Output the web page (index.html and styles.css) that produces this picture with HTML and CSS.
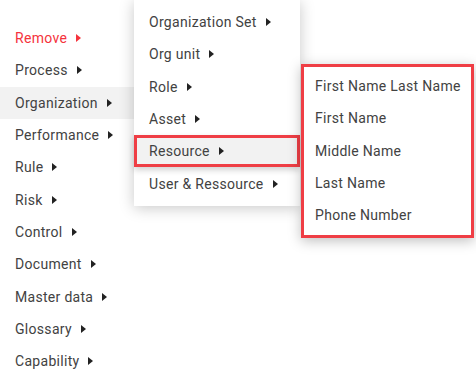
FILE: index.html
```html
<!DOCTYPE html>
<html lang="en">
<head>
  <meta charset="UTF-8" />
  <meta name="viewport" content="width=device-width, initial-scale=1" />
  <title>Cascading menu</title>
  <link rel="stylesheet" href="styles.css">
</head>
<body>
  <div class="menus">
    <ul class="menu menu-root">
      <li class="item danger">Remove <span class="caret"></span></li>
      <li class="item">Process <span class="caret"></span></li>
      <li class="item active">Organization <span class="caret"></span></li>
      <li class="item">Performance <span class="caret"></span></li>
      <li class="item">Rule <span class="caret"></span></li>
      <li class="item">Risk <span class="caret"></span></li>
      <li class="item">Control <span class="caret"></span></li>
      <li class="item">Document <span class="caret"></span></li>
      <li class="item">Master data <span class="caret"></span></li>
      <li class="item">Glossary <span class="caret"></span></li>
      <li class="item">Capability <span class="caret"></span></li>
    </ul>

    <ul class="menu menu-sub">
      <li class="item">Organization Set <span class="caret"></span></li>
      <li class="item">Org unit <span class="caret"></span></li>
      <li class="item">Role <span class="caret"></span></li>
      <li class="item">Asset <span class="caret"></span></li>
      <li class="item active marked">Resource <span class="caret"></span></li>
      <li class="item">User &amp; Ressource <span class="caret"></span></li>
    </ul>

    <ul class="menu menu-leaf">
      <li class="item">First Name Last Name</li>
      <li class="item">First Name</li>
      <li class="item">Middle Name</li>
      <li class="item">Last Name</li>
      <li class="item">Phone Number</li>
    </ul>
  </div>
</body>
</html>
```

FILE: styles.css
```css
* {
  box-sizing: border-box;
}
body, html {
  margin: 0;
  padding: 0;
  background: #fff;
  font-family: 'Roboto', 'Liberation Sans', sans-serif;
}
.menus {
  position: relative;
  width: 476px;
  height: 386px;
  overflow: hidden;
}
ul.menu {
  list-style: none;
  margin: 0;
  background: #fff;
}
.menu-root {
  margin-top: 16px !important;
  width: 134px;
  height: 380px;
  padding: 6px 0;
}
.menu-sub {
  position: absolute;
  left: 134px;
  top: 0;
  width: 166px;
  padding: 6px 0;
  box-shadow: 0 2px 14px rgba(0,0,0,0.22);
}
.menu-leaf {
  position: absolute;
  left: 301px;
  top: 64px;
  width: 173px;
  padding: 3px 0 4px;
  border: 3px solid #ef3e45;
  box-shadow: 0 3px 12px rgba(0,0,0,0.25);
}
.item {
  display: flex;
  align-items: center;
  height: 32.3px;
  padding-left: 15px;
  font-size: 14px;
  letter-spacing: 0.3px;
  color: #424242;
  white-space: nowrap;
}
.menu-leaf .item {
  padding-left: 11px;
}
.item.danger {
  color: #f5333c;
}
.item.active {
  background: #f2f2f2;
}
.item.marked {
  outline: 3px solid #ef3e45;
  outline-offset: -3px;
  box-shadow: 0 3px 6px rgba(0,0,0,0.18);
  position: relative;
}
.caret {
  display: inline-block;
  width: 0;
  height: 0;
  margin-left: 9px;
  border-left: 5px solid #222;
  border-top: 4px solid transparent;
  border-bottom: 4px solid transparent;
}
.danger .caret {
  border-left-color: #f5333c;
}
```
